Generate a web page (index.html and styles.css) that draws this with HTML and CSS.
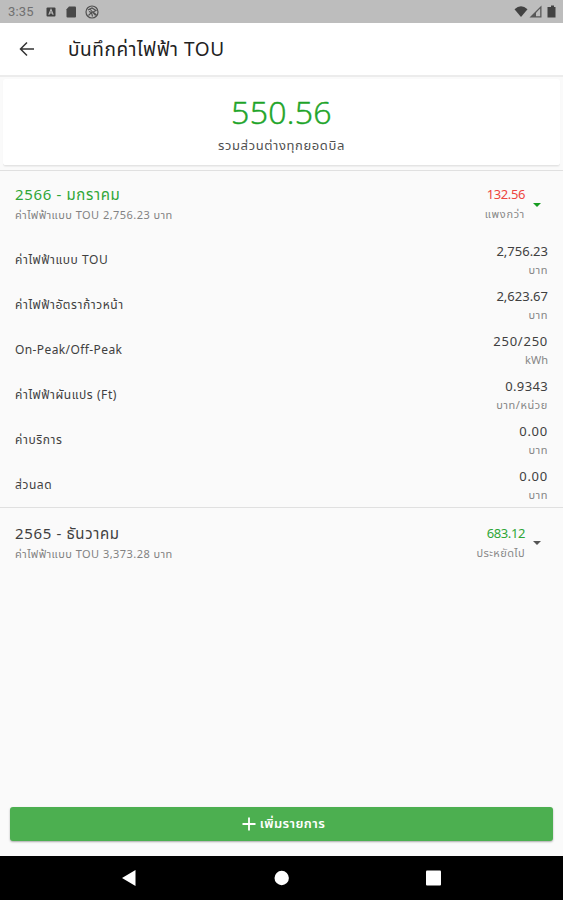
FILE: index.html
```html
<!DOCTYPE html>
<html lang="th">
<head>
<meta charset="utf-8">
<title>บันทึกค่าไฟฟ้า TOU</title>
<link rel="stylesheet" href="styles.css">
</head>
<body>
<div class="status">
  <span class="time">3:35</span>
  <svg class="st-left" width="54" height="14" viewBox="0 0 54 14">
    <rect x="0.5" y="2.500" width="9" height="9" rx="1" fill="#424242"/>
    <path d="M2.800 9.800L5 4.400l2.200 5.400M3.600 8h2.800" stroke="#bdbdbd" stroke-width="1.100" fill="none"/>
    <path d="M23 1.500h6q1 0 1 1v9q0 1-1 1h-7.500q-1 0-1-1V4.300z" fill="#484848"/>
    <circle cx="46" cy="7" r="6" fill="none" stroke="#505050" stroke-width="1.200"/>
    <path d="M42 5l4-2 4 2.500-3 1.500 3.500 3M42.500 10.500l3-3-2.500-1M45.500 7.500l1 4M43.500 3.500l6 7" fill="none" stroke="#505050" stroke-width="1.100"/>
  </svg>
  <svg class="st-right" width="44" height="14" viewBox="0 0 44 14">
    <path d="M2.500 4.200Q9-1.800 15.500 4.200L9 12z" fill="#424242"/>
    <path d="M17.500 12.500L29.500 .5v12z" fill="#585858"/>
    <path d="M24 11.300V7.800l4.200-4.200v7.700z" fill="#bdbdbd"/>
    <path d="M37.500 2H39V.5h3V2h1.500v10.500h-8V2z" fill="#424242"/>
  </svg>
</div>
<header class="appbar">
  <svg width="16" height="16" viewBox="0 0 16 16"><path d="M15 8H1.500M8 1.500L1.500 8 8 14.500" fill="none" stroke="#333" stroke-width="1.500"/></svg>
  <h1>บันทึกค่าไฟฟ้า TOU</h1>
</header>
<section class="card">
  <div class="total">550.56</div>
  <div class="caption">รวมส่วนต่างทุกยอดบิล</div>
</section>
<main class="list">
  <section class="group">
    <div class="head open">
      <div class="left"><div class="month green">2566 - มกราคม</div><div class="sub">ค่าไฟฟ้าแบบ TOU 2,756.23 บาท</div></div>
      <div class="right"><div class="diff red">132.56</div><div class="note">แพงกว่า</div></div>
      <svg class="caret" width="8" height="4" viewBox="0 0 8 4"><path d="M0 0h8L4 4z" fill="#169c21"/></svg>
    </div>
    <div class="row"><span class="name">ค่าไฟฟ้าแบบ TOU</span><div class="val"><b>2,756.23</b><i>บาท</i></div></div>
    <div class="row"><span class="name">ค่าไฟฟ้าอัตราก้าวหน้า</span><div class="val"><b>2,623.67</b><i>บาท</i></div></div>
    <div class="row"><span class="name name-latin">On-Peak/Off-Peak</span><div class="val"><b class="wide">250/250</b><i class="latin">kWh</i></div></div>
    <div class="row"><span class="name">ค่าไฟฟ้าผันแปร (Ft)</span><div class="val"><b class="mid">0.9343</b><i>บาท/หน่วย</i></div></div>
    <div class="row"><span class="name">ค่าบริการ</span><div class="val"><b class="wide">0.00</b><i>บาท</i></div></div>
    <div class="row"><span class="name">ส่วนลด</span><div class="val"><b class="wide">0.00</b><i>บาท</i></div></div>
  </section>
  <section class="group">
    <div class="head">
      <div class="left"><div class="month">2565 - ธันวาคม</div><div class="sub">ค่าไฟฟ้าแบบ TOU 3,373.28 บาท</div></div>
      <div class="right"><div class="diff green">683.12</div><div class="note tight">ประหยัดไป</div></div>
      <svg class="caret" width="8" height="4" viewBox="0 0 8 4"><path d="M0 0h8L4 4z" fill="#555"/></svg>
    </div>
  </section>
</main>
<div class="add">
  <svg width="14" height="14" viewBox="0 0 14 14"><path d="M7 .5v13M.5 7h13" stroke="#fff" stroke-width="1.800"/></svg>
  <span>เพิ่มรายการ</span>
</div>
<nav class="nav">
  <svg width="563" height="44" viewBox="0 0 563 44"><path d="M122 22l13.500-8v16z" fill="#fff"/><circle cx="281.700" cy="22" r="7.200" fill="#fff"/><rect x="426" y="14.500" width="15" height="15" rx="1" fill="#fff"/></svg>
</nav>
</body>
</html>
```
FILE: styles.css
```css
* { box-sizing: border-box; }
body { margin: 0; width: 563px; height: 900px; overflow: hidden; display: flex; flex-direction: column; background: #fafafa; color: #404040; font-family: "Noto Sans", "Noto Sans Thai", "Open Sans", sans-serif; white-space: nowrap; }
svg { display: block; flex: none; }
.status { height: 23px; background: #bdbdbd; display: flex; align-items: center; padding: 1px 7px 0 8px; color: #707070; font: 13px/20px Roboto, sans-serif; letter-spacing: .2px; }
.time { width: 38px; }
.st-right { margin-left: auto; }
.appbar { height: 54px; background: #fff; border-bottom: 2px solid #ececec; display: flex; align-items: center; padding-left: 19px; }
h1 { margin: 0 0 0 33px; font-size: 19px; line-height: 30px; font-weight: 400; color: #222; letter-spacing: .6px; }
.card { height: 87px; margin: 2px 3px 0; background: #fff; border-radius: 3px; border-bottom: 1px solid #e4e4e4; box-shadow: 0 1px 1px #eee; text-align: center; padding-top: 12px; }
.total { font-size: 32px; line-height: 42px; color: #1da428; font-weight: 300; letter-spacing: .3px; -webkit-text-stroke: .5px #1da428; font-family: "Open Sans", "Noto Sans", sans-serif; }
.caption { font-size: 13px; line-height: 24px; color: #505050; letter-spacing: .6px; }
.list { flex: 1; margin-top: 4px; }
.group { border-top: 1px solid #e0e0e0; }
.head { height: 66px; display: flex; padding: 14px 22px 0 15px; }
.open { padding-top: 12px; }
.left { flex: 1; }
.month { font-size: 15px; line-height: 22px; letter-spacing: .65px; }
.green { color: #2fa637; }
.red { color: #ed4540; }
.sub { font-size: 11px; line-height: 19px; color: #828282; letter-spacing: .46px; }
.right { text-align: right; margin-right: 8px; }
.diff { font-size: 13px; line-height: 22px; letter-spacing: -.4px; }
.note { font-size: 11px; line-height: 18px; color: #888; letter-spacing: .7px; }
.tight { letter-spacing: .4px; }
.caret { margin-top: 19px; }
.open .caret { margin-top: 20px; }
.row { height: 45px; padding: 2px 15px 0; display: flex; justify-content: space-between; align-items: center; }
.name { font-size: 12px; letter-spacing: .58px; padding-bottom: 2px; }
.name-latin { letter-spacing: .4px; }
.val { text-align: right; }
.val b { display: block; font-weight: 400; font-size: 13px; line-height: 19px; }
.val .mid { letter-spacing: .35px; }
.val .wide { letter-spacing: .75px; }
.val i { display: block; font-style: normal; font-size: 11px; line-height: 18px; color: #858585; letter-spacing: .6px; }
.val .latin { letter-spacing: 0; }
.add { height: 34px; margin: 0 10px 15px; padding-left: 4px; background: #4caf50; border-radius: 3px; box-shadow: 0 1px 2px #aaa; color: #fff; display: flex; justify-content: center; align-items: center; gap: 4px; font-size: 13px; font-weight: 600; letter-spacing: .4px; }
.nav { height: 44px; background: #000; }
```
